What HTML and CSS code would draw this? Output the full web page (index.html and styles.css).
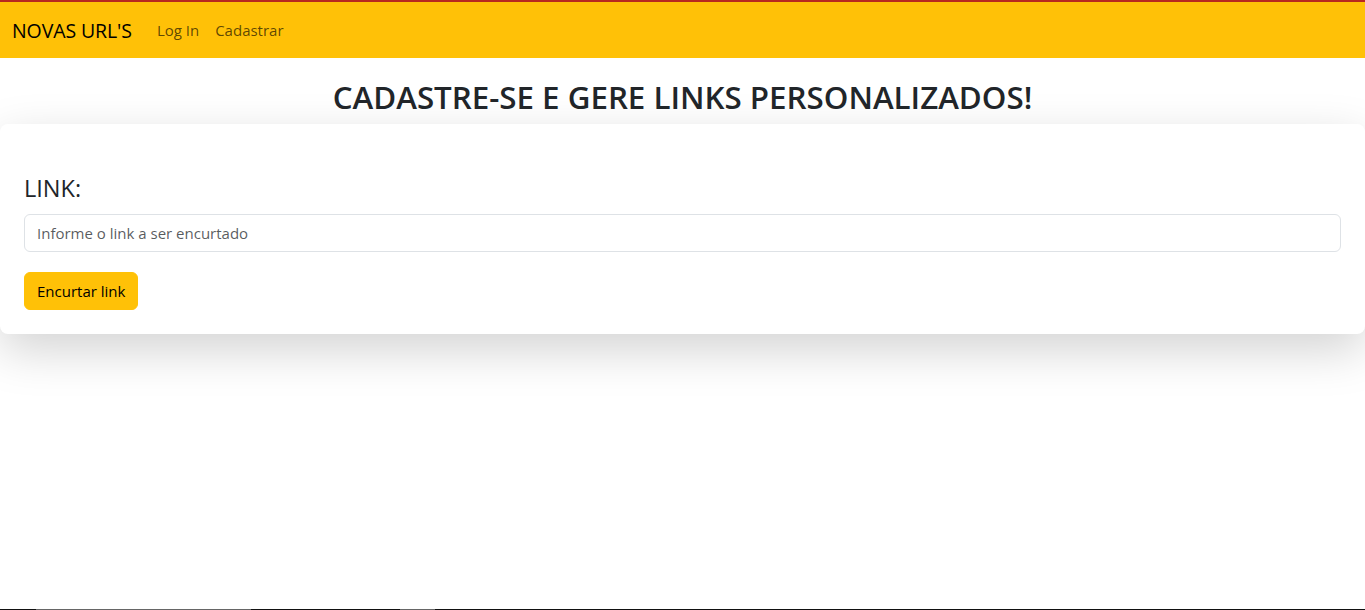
FILE: index.html
```html
<!DOCTYPE html>
<html lang="pt-BR">
<head>
<meta charset="utf-8">
<title>Novas URL's</title>
<link rel="stylesheet" href="styles.css">
</head>
<body>
<nav class="navbar">
  <a class="brand" href="#">NOVAS URL'S</a>
  <ul class="nav-links">
    <li><a href="#">Log In</a></li>
    <li><a href="#">Cadastrar</a></li>
  </ul>
</nav>
<main class="main">
  <h2 class="title">CADASTRE-SE E GERE LINKS PERSONALIZADOS!</h2>
  <form class="card">
    <label class="label" for="link">LINK:</label>
    <input class="input" id="link" type="text" placeholder="Informe o link a ser encurtado">
    <div class="actions">
      <button class="btn" type="button">Encurtar link</button>
    </div>
  </form>
</main>
<div class="bottom-line"><span class="seg-dark seg-a"></span><span class="seg-light seg-b"></span><span class="seg-dark seg-c"></span><span class="seg-light seg-d"></span></div>
</body>
</html>
```
FILE: styles.css
```css
* { box-sizing: border-box; }
html, body { height: 100%; }
body {
  margin: 0;
  font-family: "Open Sans", "Noto Sans", sans-serif;
  font-size: 15px;
  color: #212529;
  background: #fff;
  display: flex;
  flex-direction: column;
}
.navbar {
  background: #ffc107;
  border-top: 2px solid #b8271f;
  height: 58px;
  display: flex;
  align-items: center;
  padding: 0 12px;
}
.brand {
  color: #000;
  text-decoration: none;
  font-size: 19.5px;
  margin-right: 25px;
  letter-spacing: -0.1px;
}
.nav-links {
  list-style: none;
  margin: 0;
  padding: 0;
  display: flex;
  gap: 16px;
}
.nav-links a {
  color: rgba(0,0,0,0.65);
  text-decoration: none;
  font-size: 15px;
}
.main { flex: 1; }
.title {
  margin: 20px 0 8px;
  text-align: center;
  font-size: 31.3px;
  font-weight: 600;
  line-height: 38px;
  letter-spacing: 0;
  color: #212529;
}
.card {
  background: #fff;
  border-radius: 8px;
  box-shadow: 0 1rem 3rem rgba(0,0,0,0.175);
  padding: 46px 24px 24px;
  display: flex;
  flex-direction: column;
}
.label {
  font-size: 23.5px;
  line-height: 36px;
  margin-bottom: 8px;
  font-weight: 400;
}
.input {
  height: 38px;
  border: 1px solid #dee2e6;
  border-radius: 6px;
  padding: 6px 12px;
  font-family: inherit;
  font-size: 15px;
  color: #212529;
  width: 100%;
}
.input::placeholder { color: rgba(33,37,41,0.75); }
.actions { margin-top: 20px; }
.btn {
  background: #ffc107;
  border: 1px solid #ffc107;
  border-radius: 6px;
  height: 38px;
  padding: 0 12px;
  font-family: inherit;
  font-size: 15px;
  color: #000;
}
.bottom-line {
  height: 1px;
  display: flex;
  background: #111;
}
.seg-dark { background: #111; }
.seg-light { background: #666; }
.seg-a { width: 36px; }
.seg-b { width: 215px; }
.seg-c { width: 149px; }
.seg-d { width: 35px; }
```
